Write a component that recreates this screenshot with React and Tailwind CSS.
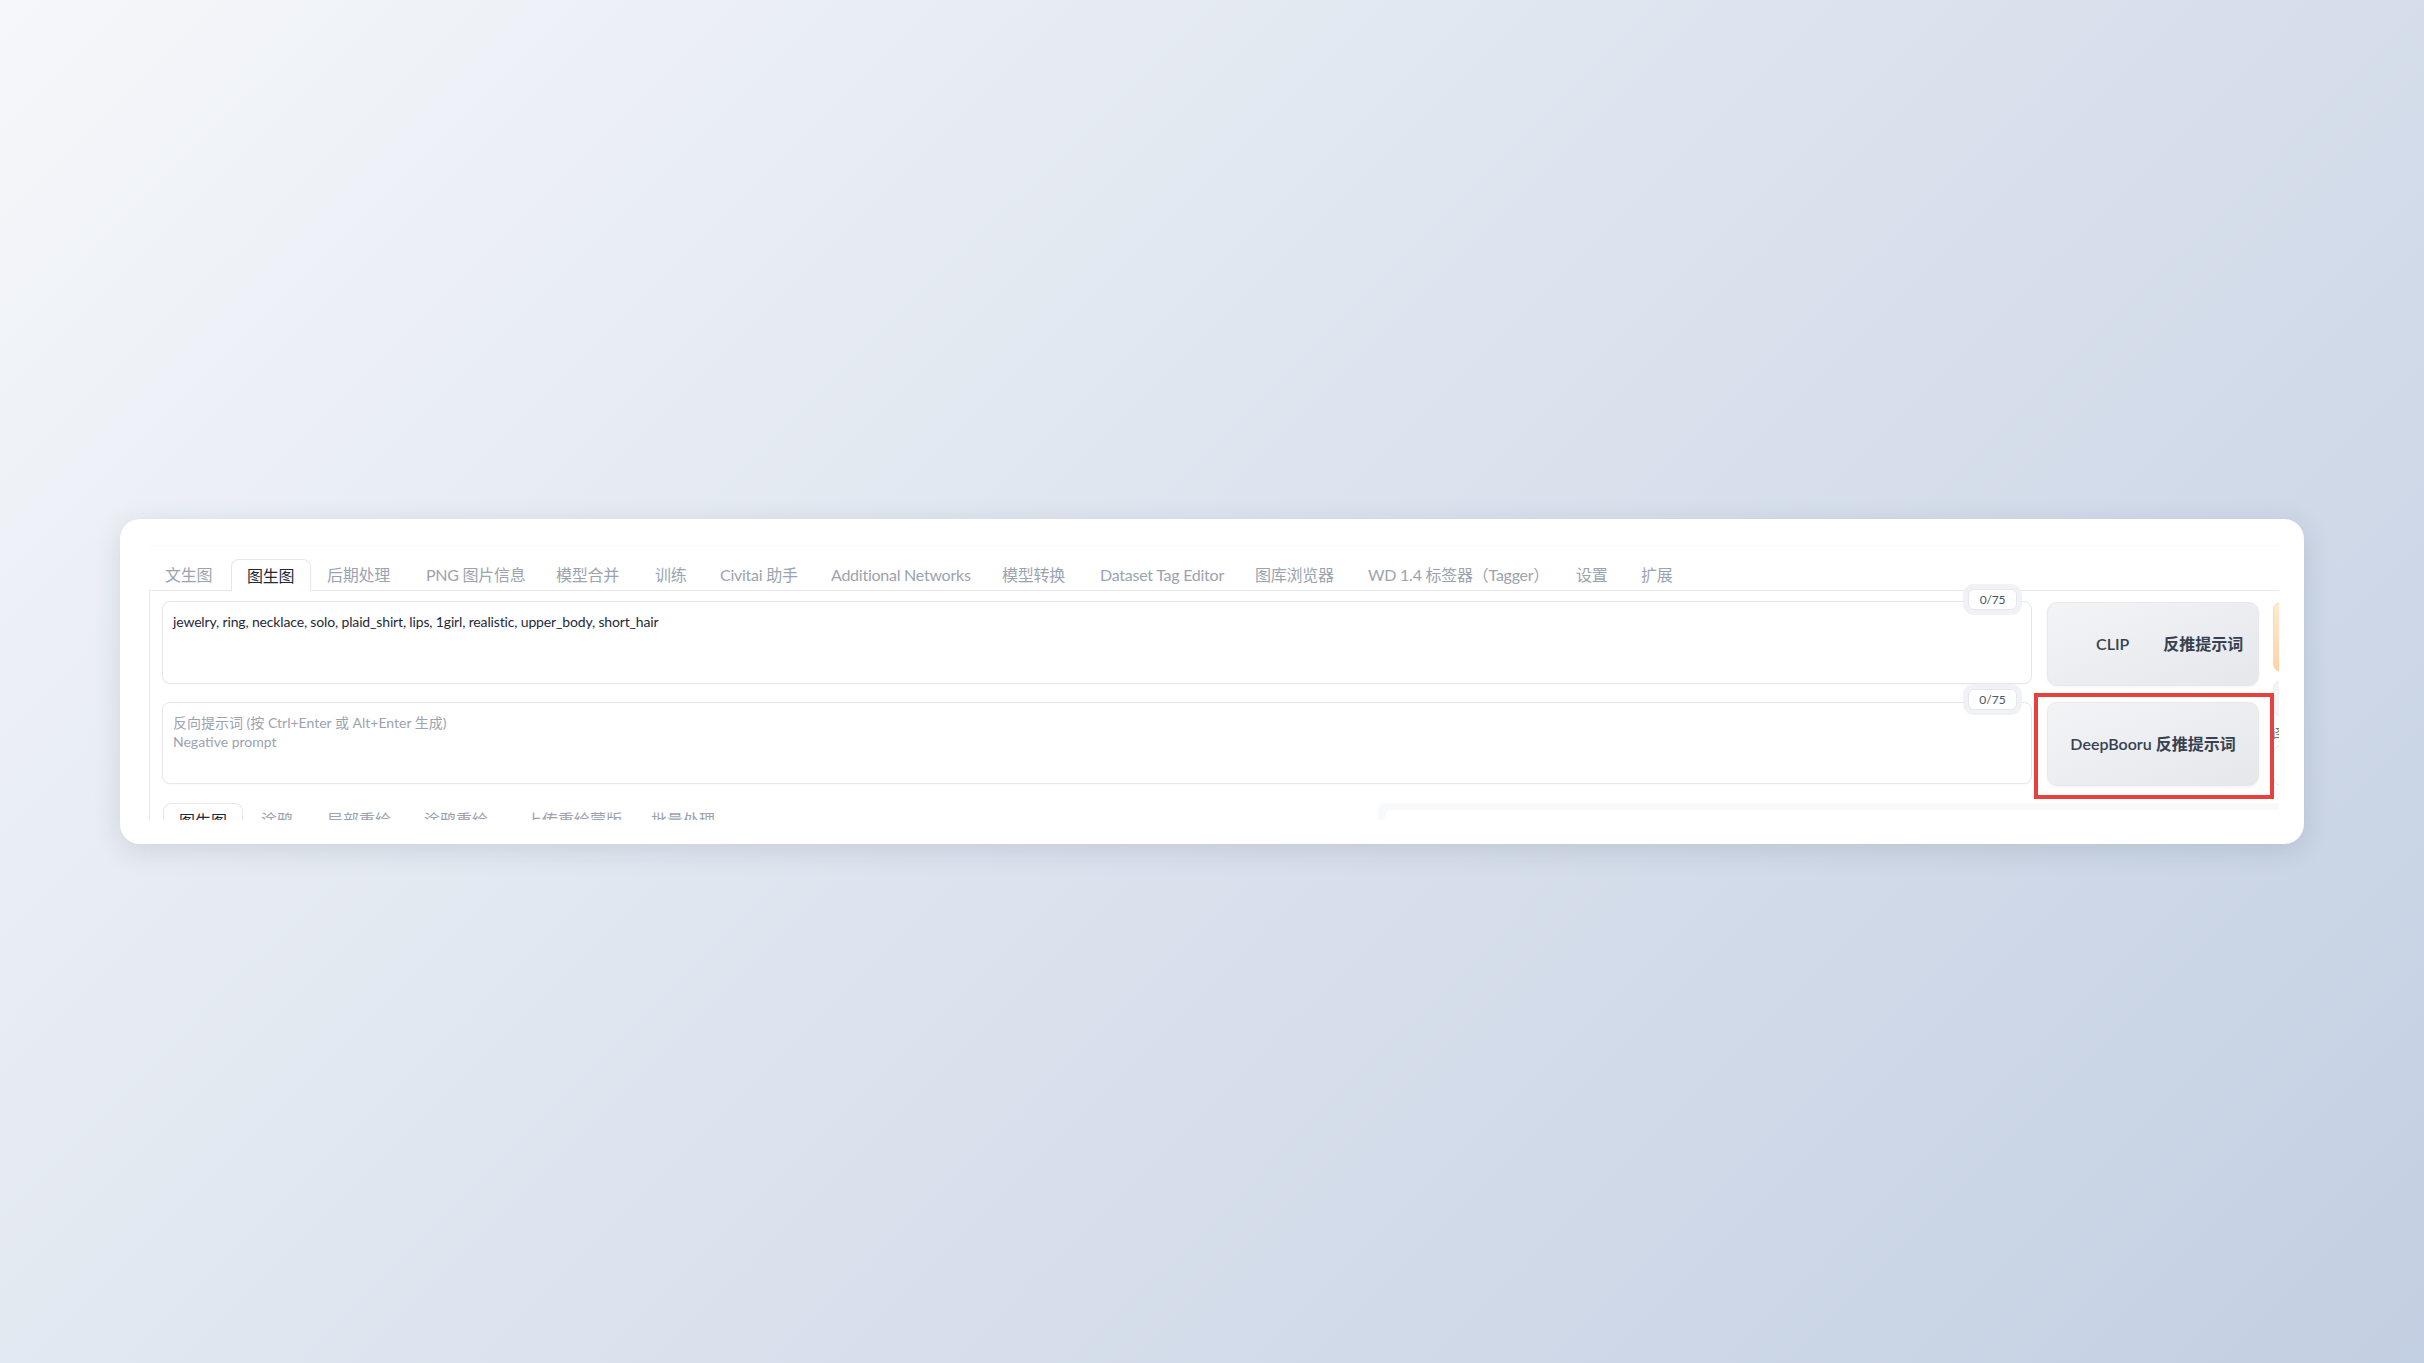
import React from "react";

const topTabs = [
  { label: "文生图", w: 82 },
  { label: "图生图", w: 81, active: true },
  { label: "后期处理", w: 99 },
  { label: "PNG 图片信息", w: 130 },
  { label: "模型合并", w: 99 },
  { label: "训练", w: 65 },
  { label: "Civitai 助手", w: 111 },
  { label: "Additional Networks", w: 171 },
  { label: "模型转换", w: 98 },
  { label: "Dataset Tag Editor", w: 155 },
  { label: "图库浏览器", w: 113 },
  { label: "WD 1.4 标签器（Tagger）", w: 208 },
  { label: "设置", w: 65 },
  { label: "扩展", w: 70 },
];

const subTabs = [
  { label: "涂鸦", w: 66 },
  { label: "局部重绘", w: 97 },
  { label: "涂鸦重绘", w: 102 },
  { label: "上传重绘蒙版", w: 125 },
  { label: "批量处理", w: 96 },
];

function Counter({ top }) {
  return (
    <div
      className={`absolute right-[14px] ${top} h-[21px] w-[49px] rounded-[6px] bg-white border border-[#e5e7eb] shadow-[0_0_0_5px_rgba(240,241,244,0.9)] flex items-center justify-center text-[12px] leading-none text-[#4b5563]`}
    >
      0/75
    </div>
  );
}

export default function App() {
  return (
    <div className="w-[2424px] h-[1363px] overflow-hidden bg-linear-135 from-[#f5f7fa] to-[#c3cfe2] pt-[519px] pl-[120px] font-['Lato','Noto_Sans_CJK_SC',sans-serif]">
      <div className="w-[2184px] h-[325px] rounded-[20px] bg-white shadow-[0_6px_28px_rgba(40,55,80,0.14)] pt-[26px] pl-[29px]">
        <div className="relative w-[2130px] h-[275px] overflow-hidden border-t border-[#f8f9fa]">
          {/* top tabs */}
          <div className="mt-[13px] flex h-[31px] items-end tracking-[-0.25px]">
            {topTabs.map((t) =>
              t.active ? (
                <div
                  key={t.label}
                  style={{ width: t.w - 1 }}
                  className="relative z-10 -mb-px h-[32px] shrink-0 rounded-t-[8px] border border-b-0 border-[#e5e7eb] bg-white pl-[15px] pt-[6px] text-[16px] leading-[20px] text-[#1f2937] whitespace-nowrap"
                >
                  {t.label}
                </div>
              ) : (
                <div
                  key={t.label}
                  style={{ width: t.w }}
                  className="h-[31px] shrink-0 pl-[16px] pt-[6px] text-[16px] leading-[20px] text-[#9ca3af] whitespace-nowrap"
                >
                  {t.label}
                </div>
              )
            )}
          </div>

          {/* tab panel */}
          <div className="border-l border-t border-[#e8e9ed] pl-[12px] pt-[10px]">
            <div className="flex">
              {/* prompts */}
              <div className="flex w-[1870px] shrink-0 flex-col">
                <div className="relative h-[83px] rounded-[8px] border border-[#e5e7eb] bg-white shadow-[0_1px_2px_rgba(0,0,0,0.03)] px-[10px] pt-[10px] text-[14px] leading-[20px] tracking-[-0.15px] text-[#1f2937]">
                  jewelry, ring, necklace, solo, plaid_shirt, lips, 1girl, realistic, upper_body, short_hair
                  <Counter top="-top-[13px]" />
                </div>
                <div className="relative mt-[18px] h-[82px] rounded-[8px] border border-[#e5e7eb] bg-white shadow-[0_1px_2px_rgba(0,0,0,0.03)] px-[10px] pt-[10px] text-[14px] leading-[19px] text-[#9ca3af]">
                  <div>反向提示词 (按 Ctrl+Enter 或 Alt+Enter 生成)</div>
                  <div>Negative prompt</div>
                  <Counter top="-top-[14px]" />
                </div>
              </div>

              {/* buttons */}
              <div className="ml-[15px] flex w-[212px] shrink-0 flex-col">
                <div className="mt-px flex h-[84px] items-center rounded-[10px] border border-[#e7e8ec] bg-linear-to-br from-[#f3f4f6] to-[#e5e7eb] pl-[48px] text-[#374151] shadow-[0_1px_3px_rgba(0,0,0,0.05)]">
                  <span className="text-[16px] font-semibold">CLIP</span>
                  <span className="ml-[34px] text-[16px] font-semibold">反推提示词</span>
                </div>
                <div className="relative mt-[16px] flex h-[84px] items-center justify-center rounded-[10px] border border-[#e7e8ec] bg-linear-to-br from-[#f3f4f6] to-[#e5e7eb] text-[16px] font-semibold text-[#374151] shadow-[0_1px_3px_rgba(0,0,0,0.05)]">
                  DeepBooru 反推提示词
                  <div className="absolute -left-[14px] -top-[10px] h-[106px] w-[240px] border-[4px] border-[#e8413d]" />
                </div>
              </div>

              {/* clipped column */}
              <div className="ml-[14px] flex w-[60px] shrink-0 flex-col">
                <div className="mt-px h-[70px] rounded-[8px] border border-[#fdd8b0] bg-linear-to-b from-[#ffead2] to-[#fed3a3]" />
                <div className="mt-[8px] h-[37px] rounded-[8px] border border-[#eceef1] bg-[#f3f4f6]" />
                <div className="mt-[8px] -ml-[2px] text-[13px] leading-[16px] text-[#6b7280]">译</div>
                <div className="mt-[4px] h-[41px] rounded-[8px] border border-[#e5e7eb] bg-white" />
              </div>
            </div>

            {/* sub tabs + output panel */}
            <div className="mt-[17px] flex">
              <div className="flex w-[1216px] shrink-0">
                <div className="ml-px h-[40px] w-[80px] shrink-0 rounded-t-[8px] border border-b-0 border-[#e5e7eb] bg-white pt-[7px] text-center text-[16px] leading-[20px] text-[#1f2937]">
                  图生图
                </div>
                <div className="ml-[2px] flex">
                  {subTabs.map((t) => (
                    <div
                      key={t.label}
                      style={{ width: t.w }}
                      className="h-[40px] shrink-0 pl-[16px] pt-[7px] text-[16px] leading-[20px] text-[#9ca3af] whitespace-nowrap"
                    >
                      {t.label}
                    </div>
                  ))}
                </div>
              </div>
              <div className="h-[40px] w-[920px] shrink-0 rounded-tl-[8px] bg-[#f8f9fb] pl-[7px] pt-[7px]">
                <div className="h-full w-full rounded-tl-[6px] bg-white" />
              </div>
            </div>
          </div>
        </div>
      </div>
    </div>
  );
}
